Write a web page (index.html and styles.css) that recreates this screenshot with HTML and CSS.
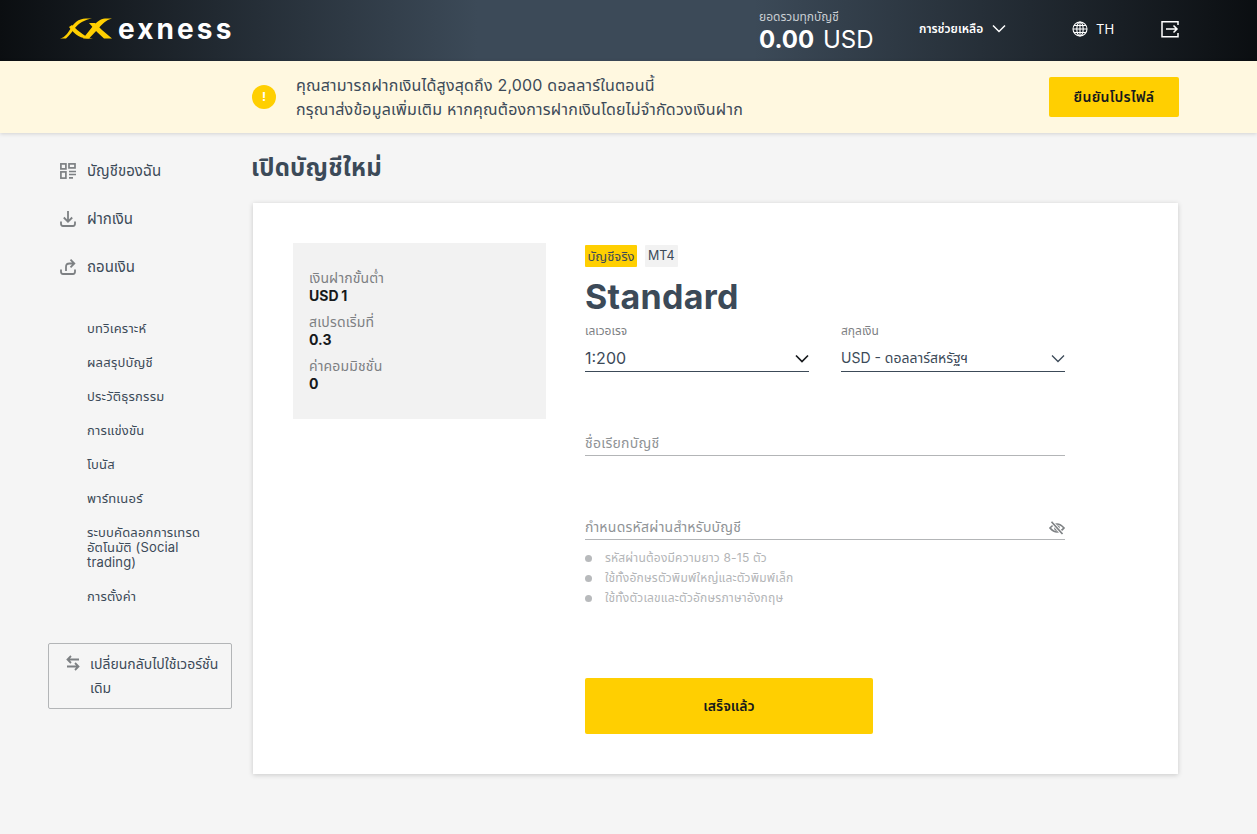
FILE: index.html
```html
<!DOCTYPE html>
<html lang="th">
<head>
<meta charset="utf-8">
<title>Exness</title>
<link rel="stylesheet" href="styles.css">
</head>
<body>
<header class="topbar">
  <div class="brand">
    <svg class="brand-mark" viewBox="0 0 52 21" width="52" height="21"><path d="M0 20.500C5 19.500 8 15 11 10C14 5 18 .8 26 .5H32C25 1.500 19 5 15 10C12 14 9 18 6 20.500Z" fill="#ffcf01"/><path d="M9 9C13 14 18 20 27 20.500H33C26 19.500 19 14 12 7Z" fill="#ffcf01"/><path d="M52 .5H45C40 1 37 4 33 8L23 20.500H29L38 11C42 6 46 2 52 .5Z" fill="#ffcf01"/><path d="M29 5H35L42 12L52 20.500H44L37 14Z" fill="#ffcf01"/></svg>
    <span class="brand-name">exness</span>
  </div>
  <div class="balance">
    <div class="balance-label">ยอดรวมทุกบัญชี</div>
    <div class="balance-value"><b>0.00</b> USD</div>
  </div>
  <div class="help">การช่วยเหลือ
    <svg width="14" height="9" viewBox="0 0 14 9"><path d="M1 1.500L7 7.500L13 1.500" fill="none" stroke="#fff" stroke-width="1.500"/></svg>
  </div>
  <div class="lang">
    <svg width="16" height="16" viewBox="0 0 16 16" fill="none" stroke="#fff" stroke-width="1.100"><circle cx="8" cy="8" r="7"/><ellipse cx="8" cy="8" rx="3.200" ry="7"/><path d="M1 8H15M2 4.500H14M2 11.500H14M8 1V15"/></svg>
    <span>TH</span>
  </div>
  <svg class="logout" width="18" height="18" viewBox="0 0 18 18" fill="none" stroke="#fff" stroke-width="1.500"><path d="M17 5V1.700H1V16.700H17V13"/><path d="M5 9H16M12.500 5.500L16 9L12.500 12.500"/></svg>
</header>

<section class="notice">
  <div class="notice-icon">!</div>
  <div class="notice-text">คุณสามารถฝากเงินได้สูงสุดถึง 2,000 ดอลลาร์ในตอนนี้<br>กรุณาส่งข้อมูลเพิ่มเติม หากคุณต้องการฝากเงินโดยไม่จำกัดวงเงินฝาก</div>
  <button class="notice-btn">ยืนยันโปรไฟล์</button>
</section>

<div class="layout">
  <aside class="sidebar">
    <nav class="main-nav">
      <a class="main-item">
        <svg width="16" height="16" viewBox="0 0 16 16" fill="none" stroke="#7d8083" stroke-width="1.700"><rect x=".9" y=".9" width="5" height="5"/><rect x=".9" y="8.900" width="5" height="6.200"/><rect x="9" y=".9" width="6" height="4"/><path d="M9 8.500H16M9 11.500H16M9 14.800H13"/></svg>
        บัญชีของฉัน
      </a>
      <a class="main-item">
        <svg width="16" height="16" viewBox="0 0 16 16" fill="none" stroke="#7d8083" stroke-width="1.800"><path d="M8 0V10.500M3.800 6.500L8 10.700L12.200 6.500"/><path d="M1 10.500V12.800Q1 15 3 15H13Q15 15 15 12.800V10.500"/></svg>
        ฝากเงิน
      </a>
      <a class="main-item">
        <svg width="16" height="16" viewBox="0 0 16 16" fill="none" stroke="#7d8083" stroke-width="1.800"><path d="M6 12V8Q6 4.500 9.500 4.500H14.500M10.500 .7L14.300 4.500L10.500 8.300"/><path d="M1 10.500V12.800Q1 15 3 15H13Q15 15 15 12.800V10.500"/></svg>
        ถอนเงิน
      </a>
    </nav>
    <nav class="sub-nav">
      <a>บทวิเคราะห์</a>
      <a>ผลสรุปบัญชี</a>
      <a>ประวัติธุรกรรม</a>
      <a>การแข่งขัน</a>
      <a>โบนัส</a>
      <a>พาร์ทเนอร์</a>
      <a class="multi">ระบบคัดลอกการเทรดอัตโนมัติ (Social trading)</a>
      <a>การตั้งค่า</a>
    </nav>
    <div class="switch-box">
      <svg width="16" height="16" viewBox="0 0 16 16" fill="none" stroke="#7d8083" stroke-width="1.800"><path d="M14 4.500H2.500M6 1L2.500 4.500L6 8"/><path d="M2 11.500H13.500M10 8L13.500 11.500L10 15"/></svg>
      <span>เปลี่ยนกลับไปใช้เวอร์ชั่นเดิม</span>
    </div>
  </aside>

  <main class="content">
    <h1 class="page-title">เปิดบัญชีใหม่</h1>
    <div class="card">
      <div class="specs">
        <div class="spec"><span>เงินฝากขั้นต่ำ</span><b>USD 1</b></div>
        <div class="spec"><span>สเปรดเริ่มที่</span><b>0.3</b></div>
        <div class="spec"><span>ค่าคอมมิชชั่น</span><b>0</b></div>
      </div>
      <form class="form">
        <div class="tags"><span class="tag tag-real">บัญชีจริง</span><span class="tag">MT4</span></div>
        <h2 class="account-name">Standard</h2>
        <div class="selects">
          <div class="select">
            <label>เลเวอเรจ</label>
            <div class="select-value">1:200
              <svg width="14" height="9" viewBox="0 0 14 9"><path d="M1 1.500L7 7.500L13 1.500" fill="none" stroke="#16191c" stroke-width="1.700"/></svg>
            </div>
          </div>
          <div class="select">
            <label>สกุลเงิน</label>
            <div class="select-value select-small">USD - ดอลลาร์สหรัฐฯ
              <svg width="14" height="9" viewBox="0 0 14 9"><path d="M1 1.500L7 7.500L13 1.500" fill="none" stroke="#3c4a58" stroke-width="1.300"/></svg>
            </div>
          </div>
        </div>
        <div class="field field-name">ชื่อเรียกบัญชี</div>
        <div class="field field-pass">กำหนดรหัสผ่านสำหรับบัญชี
          <svg width="16" height="14" viewBox="0 0 16 14" fill="none" stroke="#7d8083" stroke-width="1.700"><path d="M1 7Q8 -1 15 7Q8 15 1 7Z"/><circle cx="8" cy="7" r="2"/><path d="M2.500 .8L13.500 13" stroke="#fff" stroke-width="3.400"/><path d="M2.500 .8L13.500 13"/></svg>
        </div>
        <ul class="rules">
          <li>รหัสผ่านต้องมีความยาว 8-15 ตัว</li>
          <li>ใช้ทั้งอักษรตัวพิมพ์ใหญ่และตัวพิมพ์เล็ก</li>
          <li>ใช้ทั้งตัวเลขและตัวอักษรภาษาอังกฤษ</li>
        </ul>
        <button class="submit" type="button">เสร็จแล้ว</button>
      </form>
    </div>
  </main>
</div>
</body>
</html>
```
FILE: styles.css
```css
* { box-sizing: border-box; }
html, body { margin: 0; padding: 0; }
body {
  background: #f5f5f5;
  color: #3c4a58;
  font-family: Inter, "Noto Sans Thai", "Noto Sans", "Liberation Sans", sans-serif;
  font-size: 14px;
  height: 834px;
  overflow: hidden;
}
.topbar {
  height: 61px;
  display: flex;
  align-items: center;
  padding: 0 78px 4px 60px;
  color: #fff;
  background: linear-gradient(90deg, #0b0e11 0%, #3c4a58 38%, #3c4a58 60%, #0b0e11 100%);
}
.brand { display: flex; align-items: center; gap: 6px; width: 699px; }
.brand-mark { display: block; }
.brand-name {
  font-family: Inter, sans-serif;
  font-weight: 700;
  font-size: 28px;
  line-height: 30px;
  letter-spacing: 3.100px;
}
.balance { width: 160px; margin-top: 4px; }
.balance-label { font-size: 12px; line-height: 16px; color: #c9ced3; margin-top: 2px; }
.balance-value { font-size: 24px; line-height: 30px; word-spacing: 2px; }
.balance-value b { font-weight: 700; }
.help { display: flex; align-items: center; gap: 9px; font-size: 12px; font-weight: 600; width: 153px; }
.lang { display: flex; align-items: center; gap: 8px; font-size: 13px; width: 89px; }
.logout { display: block; }

.notice {
  height: 72px;
  background: #fff8e0;
  display: flex;
  align-items: center;
  padding: 0 78px 0 252px;
  box-shadow: 0 1px 4px rgba(0, 0, 0, .14);
  position: relative;
}
.notice-icon {
  width: 24px; height: 24px;
  border-radius: 50%;
  background: #ffcf01;
  color: #fff;
  font-weight: 700;
  font-size: 12px;
  line-height: 24px;
  text-align: center;
  margin-right: 20px;
}
.notice-text { flex: 1; font-size: 16px; line-height: 24px; color: #3c4a58; letter-spacing: .2px; }
.notice-btn {
  width: 130px; height: 40px;
  border: 0; border-radius: 2px;
  background: #ffcf01;
  color: #16191c;
  font: 600 14px Inter, "Noto Sans Thai", "Noto Sans", sans-serif;
  letter-spacing: .3px;
}

.layout { display: flex; }
.sidebar { width: 252px; flex: none; padding: 14px 20px 0 48px; }
.main-item {
  display: flex;
  align-items: center;
  gap: 11px;
  height: 48px;
  padding-left: 12px;
  font-size: 15px;
  color: #3c4a58;
}
.sub-nav { margin-top: 20px; padding-left: 39px; display: flex; flex-direction: column; }
.sub-nav a { font-size: 13px; line-height: 34px; color: #3c4a58; letter-spacing: .2px; }
.sub-nav a.multi { line-height: 15px; padding: 10px 0 9px; width: 125px; letter-spacing: .15px; }
.switch-box {
  margin-top: 30px;
  width: 184px; height: 66px;
  border: 1px solid #b3b5b7;
  border-radius: 2px;
  display: flex;
  padding: 8px 8px 0 16px;
  gap: 9px;
  font-size: 14px;
  line-height: 24px;
}
.switch-box svg { flex: none; margin-top: 3px; }

.content { width: 926px; }
.page-title { margin: 20px 0 20px -1px; font-size: 24px; line-height: 30px; font-weight: 700; color: #3c4a58; letter-spacing: .2px; }
.card {
  margin-left: 1px;
  width: 925px; height: 571px;
  background: #fff;
  box-shadow: 0 1px 5px rgba(0, 0, 0, .18);
  padding: 40px;
  display: flex;
}
.specs {
  width: 253px; height: 176px;
  background: #f2f2f2;
  padding: 26px 16px;
  flex: none;
  margin-right: 39px;
}
.spec { display: flex; flex-direction: column; font-size: 14px; line-height: 18px; margin-bottom: 8px; }
.spec span { color: #7d8083; letter-spacing: .15px; }
.spec b { color: #16191c; font-weight: 700; word-spacing: -.5px; }
.form { width: 480px; }
.tags { display: flex; gap: 8px; margin-top: 2px; }
.tag { height: 22px; padding: 0 3px; font-size: 12.500px; line-height: 22px; background: #f2f2f2; border-radius: 1px; }
.tag-real { background: #ffcf01; color: #3c4a58; font-size: 13px; padding: 0 2.500px; }
.account-name { margin: 8px 0 0; font-size: 34px; line-height: 44px; font-weight: 700; color: #3c4a58; letter-spacing: .3px; }
.selects { display: flex; gap: 32px; margin-top: 4px; }
.select { width: 224px; }
.select label { display: block; font-size: 12px; line-height: 16px; color: #7d8083; }
.select-value {
  display: flex; justify-content: space-between; align-items: center;
  height: 33px;
  padding-top: 6px;
  font-size: 16px;
  border-bottom: 1px solid #3c4a58;
}
.select-small { font-size: 14px; }
.field {
  display: flex; justify-content: space-between; align-items: center;
  height: 30px;
  padding-top: 6px;
  font-size: 14px;
  letter-spacing: .25px;
  color: #8f9396;
  border-bottom: 1px solid #b3b5b7;
}
.field-name { margin-top: 54px; }
.field-pass { margin-top: 54px; }
.rules { list-style: none; margin: 8px 0 0; padding: 0; color: #b3b5b7; font-size: 12px; line-height: 20px; letter-spacing: .2px; }
.rules li { display: flex; align-items: center; gap: 13px; }
.rules li::before { content: ""; width: 7px; height: 7px; border-radius: 50%; background: #b8babc; flex: none; }
.submit {
  display: block;
  margin-top: 70px;
  width: 288px; height: 56px;
  border: 0; border-radius: 2px;
  background: #ffcf01;
  color: #16191c;
  font: 600 14px Inter, "Noto Sans Thai", "Noto Sans", sans-serif;
}
```
